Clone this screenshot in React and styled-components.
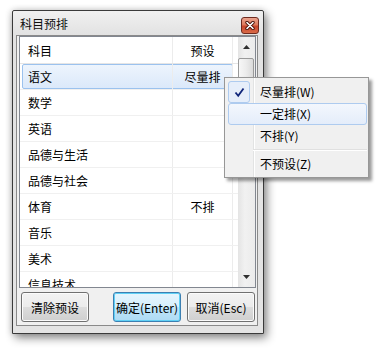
import styled, { createGlobalStyle } from "styled-components";

const GlobalStyle = createGlobalStyle`
  html, body {
    margin: 0;
    padding: 0;
    background: #ffffff;
  }
  body {
    font-family: "Noto Sans CJK SC", "Noto Sans", sans-serif;
    font-size: 12px;
    color: #000;
  }
`;

const subjects = [
  { name: "语文", value: "尽量排", selected: true },
  { name: "数学", value: "" },
  { name: "英语", value: "" },
  { name: "品德与生活", value: "" },
  { name: "品德与社会", value: "" },
  { name: "体育", value: "不排" },
  { name: "音乐", value: "" },
  { name: "美术", value: "" },
  { name: "信息技术", value: "" },
];

const menuItems = [
  { label: "尽量排(W)", checked: true },
  { label: "一定排(X)", hover: true },
  { label: "不排(Y)" },
  { sep: true },
  { label: "不预设(Z)" },
];

const App = () => {
  return (
    <Page>
      <GlobalStyle />
      <Window>
        <TitleBar>
          <Title>科目预排</Title>
          <CloseBtn>
            <svg width="10" height="9" viewBox="0 0 10 9">
              <path d="M2 1.5 L8 7.5 M8 1.5 L2 7.5" stroke="#4a1208" strokeWidth="3.4" strokeLinecap="round" />
              <path d="M2 1.5 L8 7.5 M8 1.5 L2 7.5" stroke="#ffffff" strokeWidth="1.6" strokeLinecap="round" />
            </svg>
          </CloseBtn>
        </TitleBar>
        <Body>
          <ListBox>
            <ListContent>
              <HeaderRow>
                <NameCell>科目</NameCell>
                <ValueCell>预设</ValueCell>
              </HeaderRow>
              {subjects.map((s) => (
                <Row key={s.name} selected={s.selected}>
                  <NameCell>{s.name}</NameCell>
                  <ValueCell>{s.value}</ValueCell>
                </Row>
              ))}
            </ListContent>
            <ScrollBar>
              <ArrowBtn>
                <svg width="7" height="4" viewBox="0 0 7 4">
                  <path d="M0 4 L3.5 0 L7 4 Z" fill="#303030" />
                </svg>
              </ArrowBtn>
              <Track>
                <Thumb />
              </Track>
              <ArrowBtn>
                <svg width="7" height="4" viewBox="0 0 7 4">
                  <path d="M0 0 L3.5 4 L7 0 Z" fill="#303030" />
                </svg>
              </ArrowBtn>
            </ScrollBar>
          </ListBox>
          <ButtonRow>
            <Button>清除预设</Button>
            <ButtonGroup>
              <Button primary>确定(Enter)</Button>
              <Button>取消(Esc)</Button>
            </ButtonGroup>
          </ButtonRow>
        </Body>
      </Window>
      <Menu>
        {menuItems.map((m, i) =>
          m.sep ? (
            <MenuSep key={i} />
          ) : (
            <MenuItem key={i} hover={m.hover}>
              {m.checked && (
                <CheckBox>
                  <svg width="11" height="11" viewBox="0 0 11 11">
                    <path d="M1.5 5.5 L4.2 8.8 L9.5 1.5" stroke="#10257a" strokeWidth="1.8" fill="none" />
                  </svg>
                </CheckBox>
              )}
              <MenuLabel>{m.label}</MenuLabel>
            </MenuItem>
          )
        )}
      </Menu>
    </Page>
  );
};

export default App;

const Page = styled.div`
  position: relative;
  width: 376px;
  height: 348px;
  padding: 10px 0 0 12px;
  box-sizing: border-box;
  overflow: hidden;
`;

const Window = styled.div`
  width: 252px;
  height: 324px;
  box-sizing: border-box;
  border: 1px solid #3a3a3a;
  border-radius: 2px 2px 0 0;
  padding: 0 5px 7px 3px;
  display: flex;
  flex-direction: column;
  background: linear-gradient(180deg, #f0f0f0 0px, #e2e2e2 24px, #e4e4e4 100%);
  box-shadow: 3px 4px 10px rgba(0, 0, 0, 0.45), -1px 0 6px rgba(0, 0, 0, 0.15);
`;

const TitleBar = styled.div`
  height: 24px;
  display: flex;
  align-items: center;
  justify-content: space-between;
  padding-left: 4px;
  flex-shrink: 0;
`;

const Title = styled.span`
  font-size: 12px;
  line-height: 14px;
  color: #101010;
  margin-top: 1px;
`;

const CloseBtn = styled.div`
  width: 18px;
  height: 17px;
  box-sizing: border-box;
  margin-top: 5px;
  margin-right: -1px;
  border: 1px solid #6e2a1e;
  border-radius: 3px;
  background: linear-gradient(180deg, #eba48f 0%, #de7a5c 45%, #c9452a 55%, #d86a48 100%);
  display: flex;
  align-items: center;
  justify-content: center;
`;

const Body = styled.div`
  flex: 1;
  border: 1px solid #8a8a8a;
  background: #f0f0f0;
  padding: 0 1px 3px 2px;
  display: flex;
  flex-direction: column;
`;

const ListBox = styled.div`
  height: 252px;
  box-sizing: border-box;
  border: 1px solid #828790;
  background: #ffffff;
  display: flex;
  overflow: hidden;
`;

const ListContent = styled.div`
  flex: 1;
  overflow: hidden;
`;

const HeaderRow = styled.div`
  display: flex;
  height: 27px;
  box-sizing: border-box;
  border-bottom: 1px solid #e5e5e5;
  align-items: stretch;
`;

const Row = styled.div`
  position: relative;
  display: flex;
  height: 26px;
  box-sizing: border-box;
  border-bottom: 1px solid #f0f0f0;

  &::before {
    content: "";
    display: ${(p) => (p.selected ? "block" : "none")};
    position: absolute;
    left: 2px;
    top: 0;
    width: 211px;
    height: 25px;
    box-sizing: border-box;
    border: 1px solid #9bc2ee;
    border-radius: 2px;
    background: linear-gradient(180deg, #edf4fd 0%, #dbe9fa 100%);
  }
`;

const NameCell = styled.div`
  position: relative;
  width: 153px;
  box-sizing: border-box;
  border-right: 1px solid #ececec;
  padding-left: 8px;
  display: flex;
  align-items: center;
`;

const ValueCell = styled.div`
  position: relative;
  width: 60px;
  box-sizing: border-box;
  border-right: 1px solid #ececec;
  display: flex;
  align-items: center;
  justify-content: center;
`;

const ScrollBar = styled.div`
  width: 17px;
  display: flex;
  flex-direction: column;
  background: linear-gradient(90deg, #e4e4e4 0%, #f1f1f1 40%, #ebebeb 100%);
`;

const ArrowBtn = styled.div`
  height: 20px;
  display: flex;
  align-items: center;
  justify-content: center;
`;

const Track = styled.div`
  flex: 1;
  padding: 1px 1px 0 0;
`;

const Thumb = styled.div`
  height: 110px;
  box-sizing: border-box;
  border: 1px solid #9a9a9a;
  border-radius: 2px;
  background: linear-gradient(90deg, #f7f7f7 0%, #ececec 50%, #dadada 100%);
`;

const ButtonRow = styled.div`
  display: flex;
  justify-content: space-between;
  margin-top: 4px;
  padding: 0 1px 0 2px;
`;

const ButtonGroup = styled.div`
  display: flex;
  gap: 6px;
`;

const Button = styled.div`
  width: 68px;
  height: 30px;
  box-sizing: border-box;
  border: 1px solid ${(p) => (p.primary ? "#3c7fb1" : "#707070")};
  border-radius: 3px;
  display: flex;
  align-items: center;
  justify-content: center;
  font-size: 12px;
  background: ${(p) =>
    p.primary
      ? "linear-gradient(180deg, #e6f5fd 0%, #d6effc 50%, #bfe5fa 50%, #aedbf4 100%)"
      : "linear-gradient(180deg, #f2f2f2 0%, #ebebeb 50%, #dddddd 50%, #cfcfcf 100%)"};
  box-shadow: inset 0 0 0 1px ${(p) => (p.primary ? "#5fd0f5" : "#fbfbfb")};
`;

const Menu = styled.div`
  position: absolute;
  left: 224px;
  top: 77px;
  width: 145px;
  box-sizing: border-box;
  border: 1px solid #979797;
  padding: 3px 1px 2px 3px;
  background: linear-gradient(
    90deg,
    #f1f1f1 0px,
    #f1f1f1 28px,
    #e2e3e3 28px,
    #e2e3e3 29px,
    #ffffff 29px,
    #ffffff 30px,
    #f0f0f0 30px
  );
  box-shadow: 3px 3px 3px rgba(0, 0, 0, 0.4);
`;

const MenuItem = styled.div`
  position: relative;
  height: 22px;
  box-sizing: border-box;
  display: flex;
  align-items: center;
  padding-left: 31px;
  border: 1px solid ${(p) => (p.hover ? "#aecbef" : "transparent")};
  border-radius: 3px;
  background: ${(p) =>
    p.hover ? "linear-gradient(180deg, #f3f7fd 0%, #e4edfa 100%)" : "transparent"};
`;

const CheckBox = styled.div`
  position: absolute;
  left: -1px;
  top: -1px;
  width: 22px;
  height: 22px;
  box-sizing: border-box;
  border: 1px solid #aecbef;
  border-radius: 3px;
  background: #e6eefa;
  display: flex;
  align-items: center;
  justify-content: center;
`;

const MenuLabel = styled.span`
  font-size: 12px;
  line-height: 14px;
`;

const MenuSep = styled.div`
  height: 6px;
  margin-left: 25px;
  display: flex;
  flex-direction: column;
  justify-content: center;

  &::before {
    content: "";
    height: 1px;
    background: #e0e0e0;
  }
  &::after {
    content: "";
    height: 1px;
    background: #ffffff;
  }
`;
